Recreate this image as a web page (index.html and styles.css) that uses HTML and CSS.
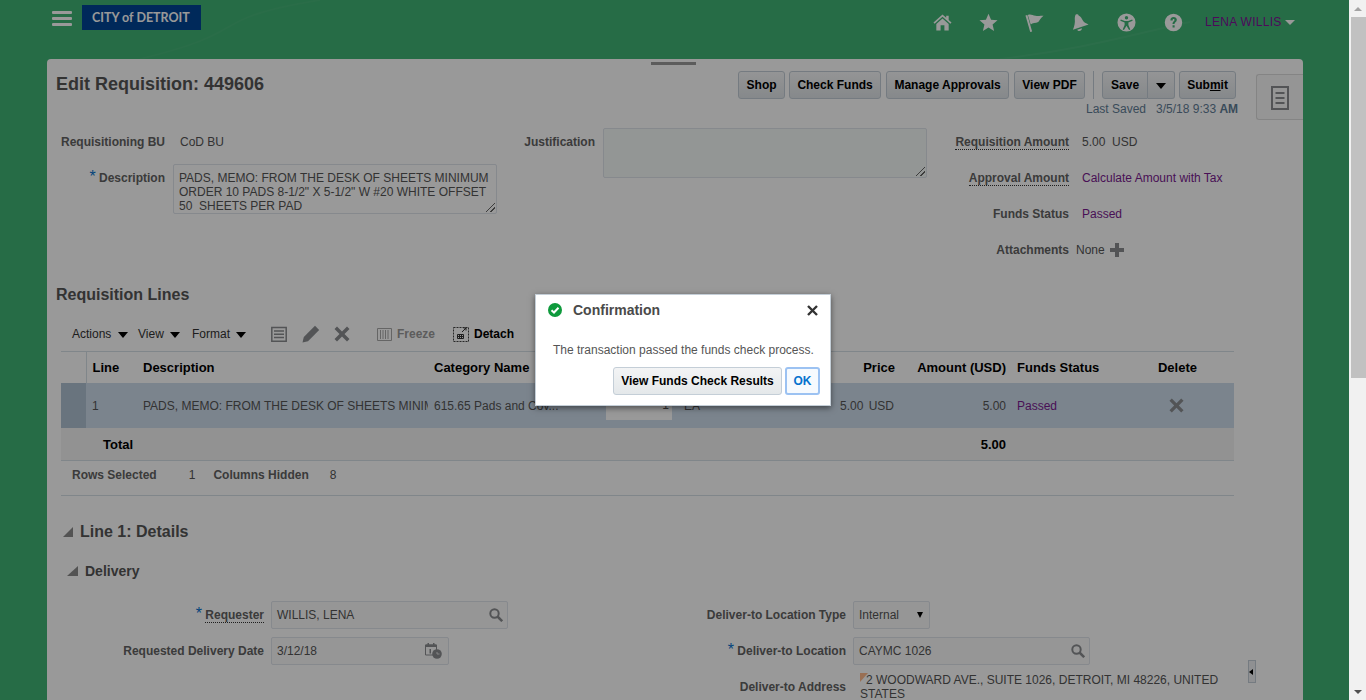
FILE: index.html
```html
<!DOCTYPE html>
<html lang="en">
<head>
    <meta charset="UTF-8">
    <meta name="viewport" content="width=device-width, initial-scale=1.0">
    <title>Edit Requisition: 449606</title>
    <link rel="stylesheet" href="styles.css">
</head>
<body>
    <div class="window">
        <main class="page">
            <svg class="swoosh" viewBox="0 0 1349 59"><path fill="none" stroke="#fff" stroke-opacity=".05" stroke-width="2" d="M1000 59C1080 50 1130 35 1190 22"/><path fill="none" stroke="#fff" stroke-opacity=".03" stroke-width="2" d="M140 59C260 30 200 20 320 0"/></svg>
            <header class="topbar">
                <div class="menu-btn"><span></span><span></span><span></span></div>
                <div class="logo">CITY of DETROIT</div>
                <nav class="global-nav">
                    <svg class="nav-icon" viewBox="0 0 20 20"><path d="M10 1.500 0.500 10l1.200 1.300L10 4l8.300 7.300 1.200-1.300-3-2.700V3h-2.600v2L10 1.500z"/><path d="M3.500 11.500 10 5.800l6.500 5.700V18.500H12V13H8v5.500H3.500z"/></svg>
                    <svg class="nav-icon" viewBox="0 0 20 20"><path d="M10 .8l2.700 6.300 6.800.6-5.200 4.500 1.600 6.700L10 15.300l-5.900 3.600 1.600-6.700L.5 7.700l6.800-.6z"/></svg>
                    <svg class="nav-icon" viewBox="0 0 20 20"><path d="M.5 2.500 2.500 2l5 17.500-2 .5z"/><path d="M3 2C6 .5 8 2.500 11 3c3 .5 5 0 8.500 0-2.500 2-4.500 5-5.500 6.500-3 1.500-6 .5-8 2.500z"/></svg>
                    <svg class="nav-icon" viewBox="0 0 20 20"><path d="M4.500 2.500C5 1 7.500 1 8 2.500c2.500 1 3.500 3.500 4.500 5.500 1 2 3 3 6 4L2 17.500c1.500-3.500 2.500-7.500 2-11 0-1.500 0-2.500.5-4z"/><path d="M6.500 17.500l5-1.500c0 3-4 4-5 1.500z"/></svg>
                    <svg class="nav-icon" viewBox="0 0 20 20"><path fill-rule="evenodd" d="M10 .5a9.500 9.500 0 1 1 0 19 9.500 9.500 0 0 1 0-19zM10 3.200a1.800 1.800 0 1 0 0 3.600 1.800 1.800 0 0 0 0-3.600zM4 6.800l-.5 1.300 4.500 2v2.400L6 17.300l1.300.6L10 13.400l2.700 4.500 1.300-.6-2-4.800v-2.400l4.500-2-.5-1.300-4.200 1.500H8.200z"/></svg>
                    <svg class="nav-icon nav-help" viewBox="0 0 20 20"><path fill-rule="evenodd" d="M10 .8a9.200 9.200 0 1 1 0 18.400A9.200 9.200 0 0 1 10 .8zM6.800 7.800h2.300c0-1 .3-1.500 1-1.500.6 0 1 .4 1 1 0 1.300-2.200 1.700-2.200 4.200h2.100c0-1.800 2.500-2 2.500-4.400 0-1.900-1.500-3-3.400-3-2.200 0-3.600 1.400-3.300 3.700zM9 12.800v2.400h2.200v-2.400z"/></svg>
                    <span class="user-name">LENA WILLIS</span><span class="user-caret"></span>
                </nav>
            </header>

            <section class="panel">
                <div class="panel-grip"></div>
                <div class="side-tab">
                    <svg class="side-tab-icon" viewBox="0 0 18 24"><path fill="none" stroke="#8a8d90" stroke-width="2" d="M1 1h16v22H1z"/><path stroke="#8a8d90" stroke-width="2" d="M4.500 7h9M4.500 12h9M4.500 17h9"/></svg>
                </div>

                <div class="title-row">
                    <h1 class="page-title">Edit Requisition: 449606</h1>
                    <div class="actions">
                        <button class="btn btn-shop">Shop</button>
                        <button class="btn btn-funds">Check Funds</button>
                        <button class="btn btn-approvals">Manage Approvals</button>
                        <button class="btn btn-pdf">View PDF</button>
                        <span class="actions-sep"></span>
                        <div class="btn-split">
                            <button class="btn btn-save">Save</button>
                            <button class="btn btn-drop"><span class="caret-down"></span></button>
                        </div>
                        <button class="btn btn-submit">Sub<u>m</u>it</button>
                    </div>
                </div>
                <div class="saved-row">
                    <span>Last Saved</span><span class="saved-value">3/5/18 9:33 <b>AM</b></span>
                </div>

                <div class="head-form">
                    <div class="form-col col-bu">
                        <div class="row-36">
                            <span class="label">Requisitioning BU</span>
                            <span class="value">CoD BU</span>
                        </div>
                        <div class="row-top">
                            <span class="label"><i class="req">*</i> Description</span>
                            <div class="textbox textbox-desc">PADS, MEMO: FROM THE DESK OF SHEETS MINIMUM ORDER 10 PADS 8-1/2" X 5-1/2" W #20 WHITE OFFSET<br>50&nbsp; SHEETS PER PAD<span class="resize"></span></div>
                        </div>
                    </div>
                    <div class="form-col col-just">
                        <div class="row-top row-just">
                            <span class="label">Justification</span>
                            <div class="textbox textbox-just"><span class="resize"></span></div>
                        </div>
                    </div>
                    <div class="form-col col-amount">
                        <div class="row-36">
                            <span class="label"><span class="dotted">Requisition Amount</span></span>
                            <span class="value">5.00&nbsp; USD</span>
                        </div>
                        <div class="row-36">
                            <span class="label"><span class="dotted">Approval Amount</span></span>
                            <span class="value link">Calculate Amount with Tax</span>
                        </div>
                        <div class="row-36">
                            <span class="label">Funds Status</span>
                            <span class="value link">Passed</span>
                        </div>
                        <div class="row-36">
                            <span class="label">Attachments</span>
                            <span class="value value-none">None</span>
                            <svg class="plus-icon" viewBox="0 0 14 14"><path fill="#8a8d90" d="M5 0h4v5h5v4H9v5H5V9H0V5h5z"/></svg>
                        </div>
                    </div>
                </div>

                <h2 class="section-title">Requisition Lines</h2>

                <div class="toolbar">
                    <span class="menu menu-actions">Actions <span class="caret-down"></span></span>
                    <span class="menu menu-view">View <span class="caret-down"></span></span>
                    <span class="menu menu-format">Format <span class="caret-down"></span></span>
                    <svg class="tool tool-doc" viewBox="0 0 16 16"><path fill="none" stroke="#8a8d90" stroke-width="1.500" d="M.8 1.500h14.400v13.700H.8z"/><path stroke="#8a8d90" stroke-width="1.500" d="M3 5h10M3 8.200h10M3 11.500h10"/></svg>
                    <svg class="tool tool-pencil" viewBox="0 0 18 18"><path fill="#8a8d90" d="M13 .8 17.200 5 6 16.200 0.500 17.500 1.800 12z"/></svg>
                    <svg class="tool tool-x" viewBox="0 0 16 16"><path fill="#8a8d90" d="M3 .5 8 5.500l5-5L15.500 3l-5 5 5 5-2.500 2.500-5-5-5 5L.500 13l5-5-5-5z"/></svg>
                    <svg class="tool tool-freeze" viewBox="0 0 15 15"><path fill="none" stroke="#a8a8a8" d="M.5 1.500h14v12H.5z"/><path stroke="#a8a8a8" d="M3.500 3v9M6 3v9M8.500 3v9M11 3v9"/></svg>
                    <span class="tool-text is-disabled">Freeze</span>
                    <svg class="tool tool-detach" viewBox="0 0 16 16"><path fill="none" stroke="#444" stroke-dasharray="2 1" d="M.5 1.500h15v14H.5z"/><path fill="none" stroke="#333" d="M4.500 8.500h6v4h-6zM4.500 10.500h6M6.500 8.500v4M8.500 8.500v4"/><path fill="none" stroke="#333" d="M9 6l4-4M10.500 2H13v2.500"/></svg>
                    <span class="tool-text">Detach</span>
                </div>

                <table class="lines">
                    <colgroup>
                        <col class="c-mark"><col class="c-line"><col class="c-desc"><col class="c-cat"><col class="c-qty"><col class="c-uom"><col class="c-price"><col class="c-amt"><col class="c-status"><col class="c-del">
                    </colgroup>
                    <thead>
                        <tr>
                            <th class="mark"></th>
                            <th>Line</th>
                            <th>Description</th>
                            <th>Category Name</th>
                            <th></th>
                            <th></th>
                            <th class="num">Price</th>
                            <th class="num">Amount (USD)</th>
                            <th>Funds Status</th>
                            <th class="center">Delete</th>
                        </tr>
                    </thead>
                    <tbody>
                        <tr class="selected">
                            <td class="mark"></td>
                            <td>1</td>
                            <td class="clip">PADS, MEMO: FROM THE DESK OF SHEETS MINIM</td>
                            <td>615.65 Pads and Cov...</td>
                            <td><div class="qty-box">1</div></td>
                            <td>EA</td>
                            <td class="num price">5.00 USD</td>
                            <td class="num">5.00</td>
                            <td class="link">Passed</td>
                            <td><svg class="row-x" viewBox="0 0 16 16"><path fill="#8a8d90" d="M3 .5 8 5.500l5-5L15.500 3l-5 5 5 5-2.500 2.500-5-5-5 5L.500 13l5-5-5-5z"/></svg></td>
                        </tr>
                    </tbody>
                    <tfoot>
                        <tr>
                            <td class="total-label" colspan="3">Total</td>
                            <td colspan="3"></td>
                            <td></td>
                            <td class="num">5.00</td>
                            <td colspan="2"></td>
                        </tr>
                    </tfoot>
                </table>

                <div class="table-status">
                    <b class="st-label">Rows Selected</b><span class="st-rows">1</span>
                    <b class="st-label">Columns Hidden</b><span class="st-cols">8</span>
                </div>

                <h2 class="section-title details-title"><span class="disclosure"></span>Line 1: Details</h2>
                <h3 class="delivery-title"><span class="disclosure disclosure-sm"></span>Delivery</h3>

                <div class="delivery">
                    <div class="delivery-col col-left">
                        <div class="field">
                            <span class="label"><i class="req">*</i> <span class="dotted">Requester</span></span>
                            <div class="input input-lg">WILLIS, LENA
                                <svg class="search" viewBox="0 0 14 14"><circle cx="5.500" cy="5.500" r="4.200" fill="none" stroke="#8a8d90" stroke-width="2"/><path stroke="#8a8d90" stroke-width="2.500" d="M8.500 8.500 13.200 13.200"/></svg>
                            </div>
                        </div>
                        <div class="field">
                            <span class="label">Requested Delivery Date</span>
                            <div class="input input-date">3/12/18
                                <svg class="calendar" viewBox="0 0 17 17"><path fill="none" stroke="#8a8d90" d="M.5 3h11v10H.5z"/><path fill="#8a8d90" d="M.5 2.500h11V5H.5zM2.500 1h1.500v2.500H2.500zM8 1h1.500v2.500H8zM4.500 7H6v4.500H4.500z"/><circle cx="12" cy="12" r="4.800" fill="#8a8d90"/><path stroke="#ddd" d="M12 12h2.500M12 10v2"/></svg>
                            </div>
                        </div>
                    </div>
                    <div class="delivery-col col-right">
                        <div class="field">
                            <span class="label">Deliver-to Location Type</span>
                            <div class="input input-select">Internal<span class="caret-down caret-sm"></span></div>
                        </div>
                        <div class="field">
                            <span class="label"><i class="req">*</i> Deliver-to Location</span>
                            <div class="input input-lg">CAYMC 1026
                                <svg class="search" viewBox="0 0 14 14"><circle cx="5.500" cy="5.500" r="4.200" fill="none" stroke="#8a8d90" stroke-width="2"/><path stroke="#8a8d90" stroke-width="2.500" d="M8.500 8.500 13.200 13.200"/></svg>
                            </div>
                        </div>
                        <div class="field field-address">
                            <span class="label">Deliver-to Address</span>
                            <div class="address"><span class="addr-flag"></span>2 WOODWARD AVE., SUITE 1026, DETROIT, MI 48226, UNITED STATES</div>
                        </div>
                    </div>
                </div>
                <div class="splitter"><span></span></div>
            </section>

            <div class="dim"></div>

            <div class="dialog">
                <div class="dialog-head">
                    <svg class="ok-icon" viewBox="0 0 14 14"><circle cx="7" cy="7" r="7" fill="#0e9a3c"/><path fill="none" stroke="#fff" stroke-width="2" d="M3.500 7.200 6 9.500l4.500-4.800"/></svg>
                    <span class="dialog-title">Confirmation</span>
                    <svg class="dialog-close" viewBox="0 0 11 11"><path stroke="#333" stroke-width="2.400" d="M1 1l9 9M10 1l-9 9"/></svg>
                </div>
                <p class="dialog-msg">The transaction passed the funds check process.</p>
                <div class="dialog-btns">
                    <button class="btn btn-results">View Funds Check Results</button>
                    <button class="btn btn-ok">OK</button>
                </div>
            </div>
        </main>

        <div class="scrollbar">
            <div class="sb-arrow"><span class="sb-up"></span></div>
            <div class="sb-thumb"></div>
            <div class="sb-track"></div>
            <div class="sb-arrow"><span class="sb-down"></span></div>
        </div>
    </div>
</body>
</html>
```

FILE: styles.css
```css
* {
    box-sizing: border-box;
}

html, body {
    margin: 0;
    height: 700px;
    overflow: hidden;
}

body {
    font-family: "Liberation Sans", Arial, sans-serif;
    font-size: 12px;
    color: #333;
}

.window {
    display: flex;
    height: 700px;
}

.page {
    position: relative;
    width: 1349px;
    height: 700px;
    overflow: hidden;
    background-color: #40b475;
}

.swoosh {
    position: absolute;
    top: 0;
    left: 0;
    width: 1349px;
    height: 59px;
}

/* top bar */
.topbar {
    position: relative;
    display: flex;
    height: 59px;
    padding: 5px 0 0 52px;
}

.menu-btn {
    display: flex;
    flex-direction: column;
    gap: 3px;
    width: 20px;
    margin-top: 6px;
}

.menu-btn span {
    height: 3px;
    border-radius: 1px;
    background-color: #fff;
}

.logo {
    width: 119px;
    height: 25px;
    margin-left: 10px;
    padding-left: 10px;
    background-color: #004596;
    color: #fff;
    font-family: Lato, sans-serif;
    font-size: 12.5px;
    font-weight: 700;
    line-height: 25px;
}

.global-nav {
    display: flex;
    align-items: center;
    height: 34px;
    margin-left: 732px;
}

.nav-icon {
    width: 19px;
    height: 19px;
    margin-right: 27px;
    fill: #fff;
}

.nav-help {
    margin-left: 1px;
}

.user-name {
    margin-left: -5px;
    color: #800f98;
    letter-spacing: .3px;
}

.user-caret {
    width: 0;
    height: 0;
    margin-left: 3px;
    border-left: 5px solid transparent;
    border-right: 5px solid transparent;
    border-top: 5px solid #fff;
}

/* main panel */
.panel {
    position: relative;
    width: 1256px;
    height: 700px;
    margin-left: 47px;
    border-radius: 4px 4px 0 0;
    background-color: #fff;
    padding-top: 12px;
}

.panel-grip {
    position: absolute;
    top: 3px;
    left: 604px;
    width: 45px;
    height: 3px;
    background-color: #9a9a9a;
}

.side-tab {
    position: absolute;
    top: 15px;
    right: 0;
    width: 47px;
    height: 46px;
    padding: 11px 0 0 14px;
    border: 1px solid #dcdcdc;
    border-right: 0;
    border-radius: 3px 0 0 3px;
    background-color: #f8f8f8;
}

.side-tab-icon {
    display: block;
    width: 18px;
    height: 24px;
}

.title-row {
    display: flex;
    align-items: center;
    height: 28px;
    padding-left: 9px;
}

.page-title {
    margin: -2px 0 0;
    font-size: 18px;
    line-height: 26px;
    font-weight: 700;
    color: #555;
}

.actions {
    display: flex;
    margin-left: 474px;
}

.btn {
    height: 28px;
    padding: 0;
    border: 1px solid #c4ced7;
    border-radius: 3px;
    background: linear-gradient(#f7f8f9, #dfe4e8);
    color: #000;
    font-family: inherit;
    font-size: 12px;
    font-weight: 700;
}

.btn-shop { width: 47px; margin-right: 4px; }
.btn-funds { width: 92px; margin-right: 5px; }
.btn-approvals { width: 123px; margin-right: 5px; }
.btn-pdf { width: 71px; }

.actions-sep {
    width: 1px;
    height: 28px;
    margin: 0 8px;
    background-color: #c4ced7;
}

.btn-split {
    display: flex;
    margin-right: 4px;
}

.btn-save {
    width: 46px;
    border-right: 1px solid #c4ced7;
    border-radius: 3px 0 0 3px;
}

.btn-drop {
    width: 27px;
    border-left: 0;
    border-radius: 0 3px 3px 0;
}

.btn-submit { width: 57px; }

.caret-down {
    display: inline-block;
    width: 0;
    height: 0;
    border-left: 5px solid transparent;
    border-right: 5px solid transparent;
    border-top: 6px solid #000;
}

.saved-row {
    display: flex;
    height: 14px;
    margin-top: 3px;
    padding-left: 1039px;
    line-height: 14px;
    color: #5f7d96;
}

.saved-value {
    margin-left: 10px;
}

/* form header */
.head-form {
    display: flex;
    margin-top: 7px;
    height: 144px;
}

.label {
    flex: none;
    text-align: right;
    font-weight: 700;
    color: #636363;
}

.req {
    color: #0572ce;
    font-style: normal;
    font-size: 16px;
    font-weight: 400;
    line-height: 0;
}

.value {
    color: #555;
}

.link {
    color: #7a1a8f;
}

.dotted {
    border-bottom: 1px dotted #333;
}

.form-col {
    flex: none;
}

.col-bu { width: 453px; }
.col-just { width: 430px; }
.col-amount { width: 373px; }

.row-36 {
    display: flex;
    align-items: center;
    height: 36px;
    padding-top: 2px;
}

.row-top {
    display: flex;
    align-items: flex-start;
    margin-top: 5px;
}

.row-top .label {
    margin-top: 7px;
}

.col-bu .label { width: 118px; }
.col-bu .value { margin-left: 15px; }
.col-just .label { width: 95px; }
.col-amount .label { width: 139px; }
.col-amount .value { margin-left: 13px; }
.col-amount .value-none { margin-left: 7px; }

.textbox {
    position: relative;
    flex: none;
    width: 324px;
    height: 50px;
    margin-left: 8px;
    padding: 6px 5px 0;
    border: 1px solid #dfe4ec;
    border-radius: 2px;
    background-color: #fff;
    color: #555;
    line-height: 14px;
}

.textbox-just {
    background-color: #f5fbf9;
}

.resize {
    position: absolute;
    right: 1px;
    bottom: 1px;
    width: 9px;
    height: 9px;
    background: linear-gradient(135deg, transparent 45%, #666 45%, #666 55%, transparent 55%, transparent 70%, #666 70%, #666 80%, transparent 80%);
}

.plus-icon {
    width: 14px;
    height: 14px;
    margin-left: 5px;
}

.section-title {
    margin: 18px 0 0 9px;
    font-size: 16px;
    line-height: 20px;
    font-weight: 700;
    color: #555;
}

/* toolbar above the table */
.toolbar {
    display: flex;
    align-items: center;
    height: 26px;
    margin: 16px 0 4px 25px;
    color: #333;
}

.menu .caret-down {
    margin-left: 3px;
}

.menu-actions { width: 66px; }
.menu-view { width: 54px; }
.menu-format { width: 79px; }

.tool {
    flex: none;
}

.tool-doc { width: 16px; height: 16px; }
.tool-pencil { width: 18px; height: 18px; margin-left: 15px; }
.tool-x { width: 16px; height: 16px; margin-left: 14px; }
.tool-freeze { width: 15px; height: 15px; margin-left: 27px; }
.tool-detach { width: 16px; height: 16px; margin-left: 18px; }

.tool-text {
    margin-left: 5px;
    font-weight: 700;
    color: #000;
}

.tool-text.is-disabled {
    color: #9a9a9a;
}

/* table */
.lines {
    width: 1173px;
    margin-left: 14px;
    border-collapse: collapse;
    table-layout: fixed;
    border-top: 1px solid #d6dfe6;
    border-bottom: 1px solid #d6dfe6;
}

.c-mark { width: 25px; }
.c-line { width: 51px; }
.c-desc { width: 291px; }
.c-cat { width: 172px; }
.c-qty { width: 78px; }
.c-uom { width: 102px; }
.c-price { width: 120px; }
.c-amt { width: 111px; }
.c-status { width: 111px; }
.c-del { width: 112px; }

.lines th {
    height: 31px;
    padding: 0 5px 0 6px;
    text-align: left;
    font-size: 13px;
    font-weight: 700;
    color: #000;
}

.lines th.mark {
    border-right: 1px solid #d6dfe6;
}

.lines .num {
    text-align: right;
}

.lines th.center {
    padding-right: 7px;
    text-align: center;
}

.lines td {
    padding: 0 5px 0 6px;
    color: #555;
    white-space: nowrap;
    overflow: hidden;
}

.selected td {
    height: 45px;
    padding-top: 1px;
    background-color: #cddcec;
}

.selected .mark {
    background-color: #afc2d2;
}

.selected td.link {
    color: #7a1a8f;
}

.selected .price {
    padding-right: 6px;
    word-spacing: 2px;
}

.qty-box {
    width: 66px;
    height: 29px;
    padding-right: 3px;
    background-color: #fff;
    text-align: right;
    line-height: 29px;
}

.row-x {
    display: block;
    width: 15px;
    height: 15px;
    margin-left: 41px;
}

.lines tfoot td {
    height: 33px;
    padding-top: 2px;
    background-color: #f4f4f4;
    font-size: 13px;
    font-weight: 700;
    color: #000;
}

.lines tfoot .total-label {
    padding-left: 42px;
}

.table-status {
    display: flex;
    width: 1173px;
    height: 35px;
    margin-left: 14px;
    padding: 7px 0 0 11px;
    border-bottom: 1px solid #d6dfe6;
    line-height: 14px;
    color: #555;
}

.st-label {
    color: #636363;
}

.st-rows { margin: 0 18px 0 32px; }
.st-cols { margin-left: 21px; }

.details-title {
    display: flex;
    align-items: center;
    margin: 26px 0 0 16px;
}

.disclosure {
    width: 0;
    height: 0;
    margin-right: 7px;
    border-left: 10px solid transparent;
    border-bottom: 10px solid #8a8a8a;
}

.delivery-title {
    display: flex;
    align-items: center;
    margin: 20px 0 0 20px;
    font-size: 14px;
    line-height: 18px;
    font-weight: 700;
    color: #555;
}

.disclosure-sm {
    border-left-width: 11px;
    border-bottom-width: 10px;
}

/* delivery form */
.delivery {
    display: flex;
    margin-top: 21px;
}

.col-left { width: 653px; }
.col-left .label { width: 217px; }
.col-right { width: 603px; }
.col-right .label { width: 146px; }

.field {
    display: flex;
    align-items: center;
    height: 28px;
    margin-bottom: 8px;
}

.input {
    position: relative;
    display: flex;
    align-items: center;
    height: 28px;
    margin-left: 7px;
    padding-left: 5px;
    border: 1px solid #dfe4ec;
    border-radius: 2px;
    background-color: #fbfbfb;
    color: #555;
}

.input-lg { width: 237px; }
.input-date { width: 178px; }
.input-select { width: 77px; }

.search {
    position: absolute;
    right: 4px;
    top: 6px;
    width: 14px;
    height: 14px;
}

.calendar {
    position: absolute;
    right: 6px;
    top: 4px;
    width: 17px;
    height: 17px;
}

.caret-sm {
    margin-left: 18px;
    border-left-width: 3px;
    border-right-width: 3px;
    border-top-width: 6px;
}

.field-address {
    align-items: flex-start;
}

.field-address .label {
    margin-top: 7px;
}

.address {
    position: relative;
    width: 370px;
    margin-left: 14px;
    line-height: 14px;
    color: #555;
    text-indent: 6px;
}

.addr-flag {
    position: absolute;
    left: 0;
    top: 0;
    width: 0;
    height: 0;
    border-top: 9px solid #ffb98a;
    border-right: 8px solid transparent;
}

.splitter {
    position: absolute;
    top: 601px;
    left: 1201px;
    display: flex;
    align-items: center;
    width: 8px;
    height: 23px;
    border: 1px solid #c4ced7;
    background-color: #eef1f3;
}

.splitter span {
    width: 0;
    height: 0;
    border-top: 3px solid transparent;
    border-bottom: 3px solid transparent;
    border-right: 4px solid #000;
}

/* modal */
.dim {
    position: absolute;
    inset: 0;
    background-color: rgba(0, 0, 0, .4);
}

.dialog {
    position: absolute;
    top: 294px;
    left: 535px;
    width: 296px;
    height: 112px;
    border: 1px solid #c4ced7;
    background-color: #fff;
    box-shadow: 0 2px 6px rgba(0, 0, 0, .5);
}

.dialog-head {
    display: flex;
    align-items: center;
    height: 30px;
    padding: 0 12px;
}

.ok-icon {
    width: 14px;
    height: 14px;
}

.dialog-title {
    margin-left: 11px;
    font-size: 14px;
    font-weight: 700;
    color: #4a4a4a;
}

.dialog-close {
    width: 11px;
    height: 11px;
    margin-left: auto;
}

.dialog-msg {
    margin: 18px 0 0 17px;
    line-height: 14px;
    color: #555;
}

.dialog-btns {
    display: flex;
    justify-content: flex-end;
    gap: 3px;
    margin-top: 10px;
    padding-right: 10px;
}

.btn-results {
    width: 169px;
    background: linear-gradient(#f3f4f5, #e4e8ea);
}

.btn-ok {
    width: 35px;
    border: 2px solid #9cc2f2;
    background: #f6fafe;
    color: #0572ce;
}

/* browser scrollbar, not dimmed */
.scrollbar {
    display: flex;
    flex-direction: column;
    width: 17px;
    height: 700px;
    background-color: #f1f1f1;
}

.sb-arrow {
    display: flex;
    align-items: center;
    justify-content: center;
    flex: none;
    height: 17px;
}

.sb-up, .sb-down {
    width: 0;
    height: 0;
    border-left: 4px solid transparent;
    border-right: 4px solid transparent;
}

.sb-up { border-bottom: 4px solid #a3a3a3; }
.sb-down { border-top: 4px solid #505050; }

.sb-thumb {
    flex: none;
    height: 361px;
    margin-left: 2px;
    background-color: #c1c1c1;
}

.sb-track {
    flex: 1;
}
```
